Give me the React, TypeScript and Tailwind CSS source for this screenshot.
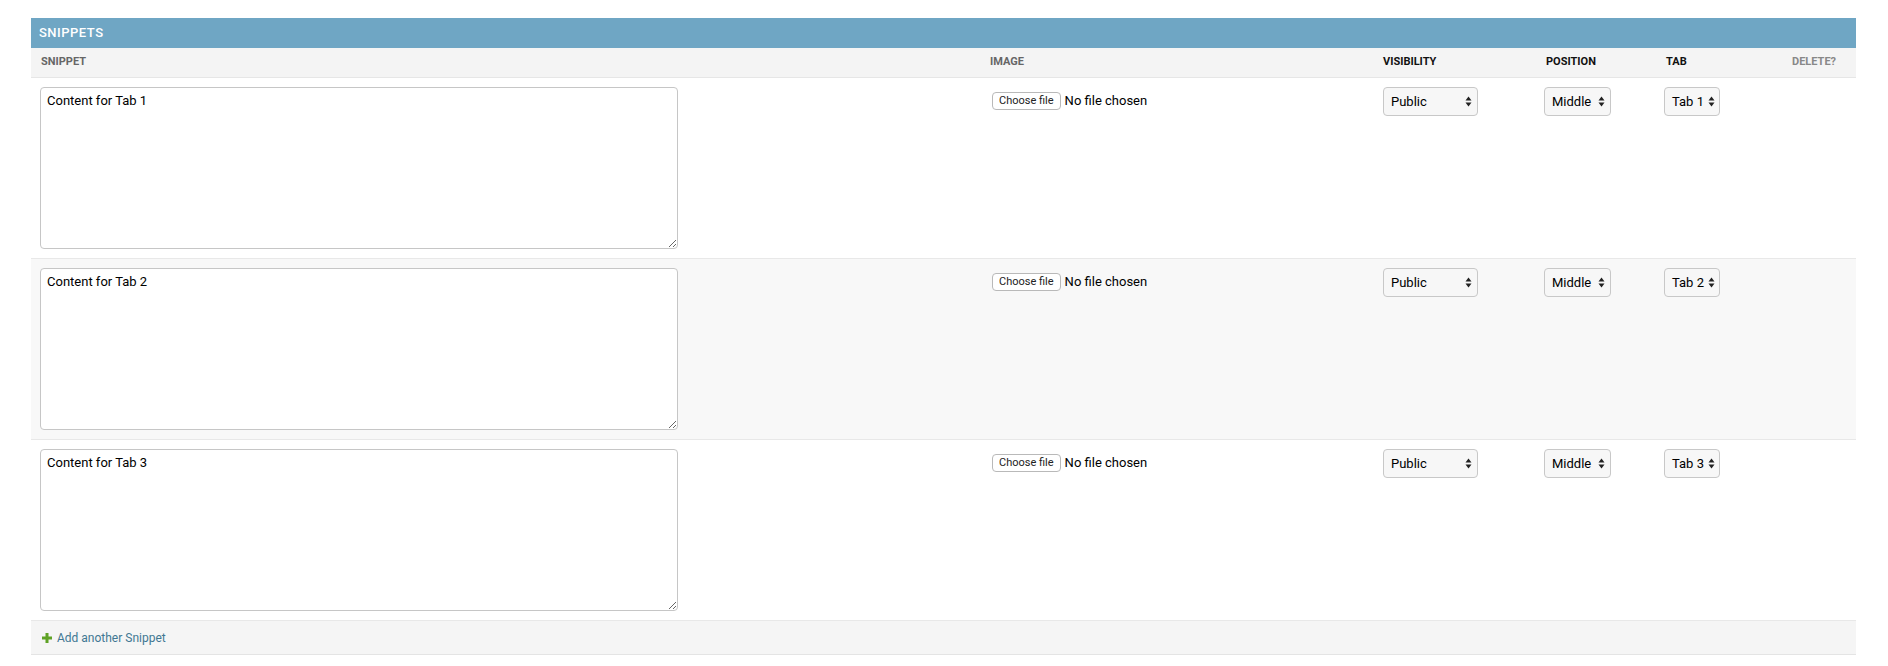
import React from 'react';

const rows = [
  { content: 'Content for Tab 1', tab: 'Tab 1' },
  { content: 'Content for Tab 2', tab: 'Tab 2' },
  { content: 'Content for Tab 3', tab: 'Tab 3' },
];

const cols = 'grid grid-cols-[951px_393px_163px_120px_126px_72px]';

function SelectBox({ value, width }: { value: string; width: string }) {
  return (
    <div
      className={`${width} h-[29px] flex items-center justify-between gap-[4px] pl-[7px] pr-[5px] border border-[#c8c8c8] rounded-[4px] bg-[#f7f7f7] text-[13px] text-black whitespace-nowrap`}
    >
      <span>{value}</span>
      <svg width="7" height="11" viewBox="0 0 7 11" className="shrink-0">
        <path d="M3.5 0.5 L6.5 4.5 L0.5 4.5 Z" fill="#222" />
        <path d="M3.5 10.5 L6.5 6.5 L0.5 6.5 Z" fill="#222" />
      </svg>
    </div>
  );
}

export default function App() {
  return (
    <div className="w-[1888px] h-[666px] bg-white pt-[18px] pl-[31px] font-['Roboto','Liberation_Sans',sans-serif]">
      <div className="w-[1825px]">
        <div className="h-[30px] bg-[#6fa6c4] flex items-center px-[8px] text-white text-[13px] font-medium tracking-[0.5px] uppercase">
          Snippets
        </div>

        <div className={`${cols} h-[30px] bg-[#f4f4f4] border-b border-[#e6e6e6] text-[11px] font-bold uppercase items-center`}>
          <div className="px-[10px] text-[#666]">Snippet</div>
          <div className="px-[8px] text-[#666]">Image</div>
          <div className="px-[8px] text-[#111]">Visibility</div>
          <div className="px-[8px] text-[#111]">Position</div>
          <div className="px-[8px] text-[#111]">Tab</div>
          <div className="px-[8px] text-[#888]">Delete?</div>
        </div>

        {rows.map((row, i) => (
          <div
            key={row.tab}
            className={`${cols} h-[181px] border-b border-[#e8e8e8] pt-[9px] ${i === 1 ? 'bg-[#f8f8f8]' : 'bg-white'}`}
          >
            <div className="px-[9px]">
              <textarea
                readOnly
                value={row.content}
                className="block w-[638px] h-[162px] border border-[#c6c6c6] rounded-[4px] bg-white px-[6px] py-[5px] text-[13px] leading-[16px] text-black resize-y outline-none font-['Roboto','Liberation_Sans',sans-serif]"
              />
            </div>
            <div className="px-[10px] pt-[4px]">
              <div className="flex items-center gap-[4px]">
                <span className="h-[18px] px-[6px] flex items-center border border-[#b9b9b9] rounded-[4px] bg-white text-[11px] text-[#222]">
                  Choose file
                </span>
                <span className="text-[13px] text-black">No file chosen</span>
              </div>
            </div>
            <div className="px-[8px]">
              <SelectBox value="Public" width="w-[95px]" />
            </div>
            <div className="px-[6px]">
              <SelectBox value="Middle" width="w-[67px]" />
            </div>
            <div className="px-[6px]">
              <SelectBox value={row.tab} width="w-[56px]" />
            </div>
            <div />
          </div>
        ))}

        <div className="h-[34px] bg-[#f5f5f5] border-b border-[#e4e4e4] flex items-center pl-[11px] gap-[5px]">
          <svg width="10" height="10" viewBox="0 0 10 10">
            <rect x="3.5" y="0" width="3" height="10" fill="#5fa225" />
            <rect x="0" y="3.5" width="10" height="3" fill="#5fa225" />
          </svg>
          <span className="text-[12px] text-[#417893]">Add another Snippet</span>
        </div>
      </div>
    </div>
  );
}
